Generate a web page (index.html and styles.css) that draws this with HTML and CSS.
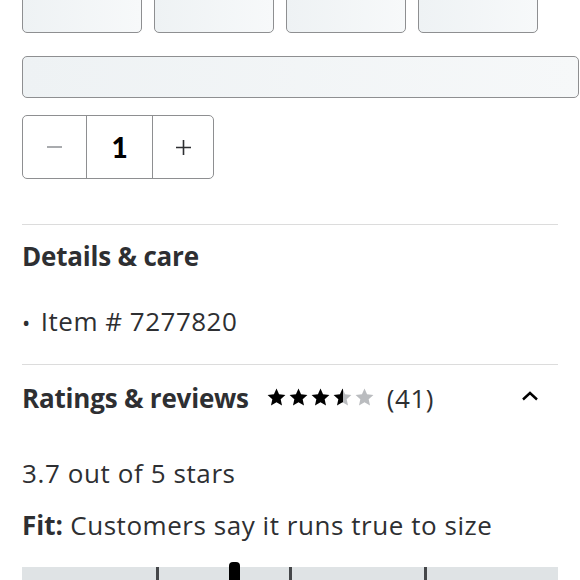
FILE: index.html
```html
<!DOCTYPE html>
<html>
<head>
<meta charset="utf-8">
<link rel="stylesheet" href="styles.css">
</head>
<body>
<div class="page">
  <div class="swatches">
    <div class="swatch"></div>
    <div class="swatch"></div>
    <div class="swatch"></div>
    <div class="swatch"></div>
  </div>
  <div class="wide-btn"></div>
  <div class="stepper">
    <div class="step minus"><span class="minus-bar"></span></div>
    <div class="step qty">1</div>
    <div class="step plus">
      <svg width="17" height="17" viewBox="0 0 17 17"><path d="M8.5 1v15M1 8.5h15" stroke="#2e2f32" stroke-width="1.6" fill="none"/></svg>
    </div>
  </div>

  <section class="details">
    <h2 class="heading">Details &amp; care</h2>
    <p class="item"><span class="bullet">•</span>Item # 7277820</p>
  </section>

  <section class="ratings">
    <div class="ratings-row">
      <h2 class="heading">Ratings &amp; reviews</h2>
      <div class="stars">
        <svg width="19" height="18" viewBox="0 0 24 23"><path d="M12 .6L15.29 8.07 23.41 8.89 17.33 14.33 19.05 22.31 12 18.2 4.95 22.31 6.67 14.33 .59 8.89 8.71 8.07Z" fill="#000"/></svg>
        <svg width="19" height="18" viewBox="0 0 24 23"><path d="M12 .6L15.29 8.07 23.41 8.89 17.33 14.33 19.05 22.31 12 18.2 4.95 22.31 6.67 14.33 .59 8.89 8.71 8.07Z" fill="#000"/></svg>
        <svg width="19" height="18" viewBox="0 0 24 23"><path d="M12 .6L15.29 8.07 23.41 8.89 17.33 14.33 19.05 22.31 12 18.2 4.95 22.31 6.67 14.33 .59 8.89 8.71 8.07Z" fill="#000"/></svg>
        <svg width="19" height="18" viewBox="0 0 24 23"><defs><linearGradient id="half"><stop offset="52%" stop-color="#000"/><stop offset="52%" stop-color="#babcbf"/></linearGradient></defs><path d="M12 .6L15.29 8.07 23.41 8.89 17.33 14.33 19.05 22.31 12 18.2 4.95 22.31 6.67 14.33 .59 8.89 8.71 8.07Z" fill="url(#half)"/></svg>
        <svg width="19" height="18" viewBox="0 0 24 23"><path d="M12 .6L15.29 8.07 23.41 8.89 17.33 14.33 19.05 22.31 12 18.2 4.95 22.31 6.67 14.33 .59 8.89 8.71 8.07Z" fill="#babcbf"/></svg>
      </div>
      <span class="count">(41)</span>
      <svg class="chevron" width="18" height="10" viewBox="0 0 18 10"><path d="M2 8.5L9 2l7 6.5" stroke="#000" stroke-width="2.4" fill="none"/></svg>
    </div>
    <p class="avg">3.7 out of 5 stars</p>
    <p class="fit"><b>Fit:</b> Customers say it runs true to size</p>
    <div class="fit-bar">
      <span class="tick t1"></span>
      <span class="marker"></span>
      <span class="tick t2"></span>
      <span class="tick t3"></span>
    </div>
  </section>
</div>
</body>
</html>
```

FILE: styles.css
```css
html, body {
  margin: 0;
  padding: 0;
  background: #fff;
}
body {
  font-family: "Open Sans", Lato, sans-serif;
  color: #2e2f32;
  overflow: hidden;
  height: 580px;
}
.page {
  padding: 0 22px;
  width: 536px;
}
.swatches {
  display: flex;
  gap: 12px;
  margin-top: -27px;
}
.swatch {
  width: 118px;
  height: 58px;
  border: 1px solid #8e8f91;
  border-radius: 5px;
  background: linear-gradient(90deg, #eef2f4, #f7f9fa);
}
.wide-btn {
  margin-top: 23px;
  width: 555px;
  height: 40px;
  border: 1px solid #8e8f91;
  border-radius: 5px;
  background: linear-gradient(90deg, #eef2f4, #f6f8f9);
}
.stepper {
  margin-top: 17px;
  display: flex;
  width: 190px;
  height: 62px;
  border: 1px solid #8e8f91;
  border-radius: 5px;
}
.step {
  display: flex;
  align-items: center;
  justify-content: center;
}
.minus { width: 63px; border-right: 1px solid #8e8f91; }
.qty {
  width: 65px;
  border-right: 1px solid #8e8f91;
  font-family: Lato, sans-serif;
  font-weight: 900;
  font-size: 28px;
  color: #000;
}
.plus { flex: 1; }
.minus-bar {
  display: block;
  width: 15px;
  height: 2px;
  background: #a9abae;
}
.details {
  margin-top: 45px;
  border-top: 1px solid #dcdcdc;
  padding-top: 15px;
  padding-bottom: 27px;
  border-bottom: 1px solid #dcdcdc;
}
.heading {
  margin: 0;
  font-size: 26px;
  line-height: 32px;
  font-weight: 700;
  letter-spacing: -0.2px;
}
.item {
  margin: 33px 0 0;
  font-size: 26px;
  line-height: 32px;
  height: 32px;
  letter-spacing: 0.5px;
}
.bullet {
  font-size: 22px;
  line-height: 0;
  margin-right: 10px;
}
.ratings {
  padding-top: 17px;
}
.ratings-row {
  display: flex;
  align-items: center;
  height: 32px;
}
.stars {
  display: flex;
  gap: 3px;
  margin-left: 18px;
  margin-top: -2px;
}
.count {
  margin-left: 13px;
  font-size: 26px;
  line-height: 32px;
  letter-spacing: 0.5px;
}
.chevron {
  margin-left: auto;
  margin-right: 19px;
  margin-top: -4px;
}
.avg {
  margin: 43px 0 0;
  font-size: 26px;
  line-height: 32px;
  letter-spacing: 0.6px;
}
.fit {
  margin: 20px 0 0;
  font-size: 26px;
  line-height: 32px;
  letter-spacing: 0.55px;
}
.fit b { font-weight: 700; letter-spacing: 0; }
.fit-bar {
  position: relative;
  margin-top: 26px;
  height: 20px;
  background: #dfe3e5;
}
.tick {
  position: absolute;
  top: 0;
  width: 3px;
  height: 20px;
  background: #45474a;
}
.t1 { left: 134px; }
.t2 { left: 267px; }
.t3 { left: 402px; }
.marker {
  position: absolute;
  top: -5px;
  left: 207px;
  width: 11px;
  height: 25px;
  background: #000;
  border-radius: 4px 4px 0 0;
}
```
